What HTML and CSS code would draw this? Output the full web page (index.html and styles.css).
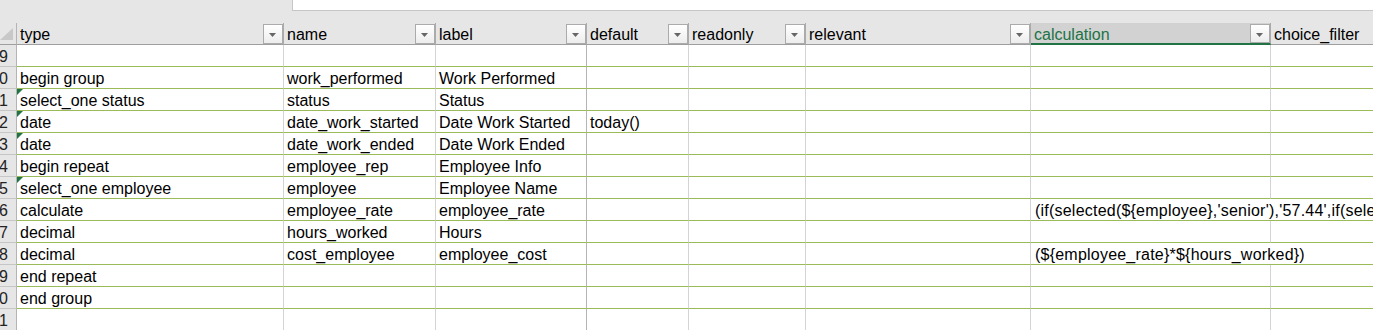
FILE: index.html
```html
<!DOCTYPE html>
<html lang="en">
<head>
<meta charset="utf-8">
<title>Sheet</title>
<link rel="stylesheet" href="styles.css">
</head>
<body>
<div class="app">
  <div class="topbar"><div class="formula"></div></div>
  <div class="viewport">
    <div class="sheet">
      <div class="corner"><svg class="selall" width="14" height="13" viewBox="0 0 14 13"><polygon points="13,0 13,12 0,12" fill="#c8c8c8"/></svg></div>
      <div class="hc"><span>type</span><i class="dd"><svg width="8" height="4" viewBox="0 0 8 4"><polygon points="0,0 7,0 3.5,4" fill="#666"/></svg></i></div>
      <div class="hc"><span>name</span><i class="dd"><svg width="8" height="4" viewBox="0 0 8 4"><polygon points="0,0 7,0 3.5,4" fill="#666"/></svg></i></div>
      <div class="hc"><span>label</span><i class="dd"><svg width="8" height="4" viewBox="0 0 8 4"><polygon points="0,0 7,0 3.5,4" fill="#666"/></svg></i></div>
      <div class="hc"><span>default</span><i class="dd"><svg width="8" height="4" viewBox="0 0 8 4"><polygon points="0,0 7,0 3.5,4" fill="#666"/></svg></i></div>
      <div class="hc"><span>readonly</span><i class="dd"><svg width="8" height="4" viewBox="0 0 8 4"><polygon points="0,0 7,0 3.5,4" fill="#666"/></svg></i></div>
      <div class="hc"><span>relevant</span><i class="dd"><svg width="8" height="4" viewBox="0 0 8 4"><polygon points="0,0 7,0 3.5,4" fill="#666"/></svg></i></div>
      <div class="hc sel"><span>calculation</span><i class="dd"><svg width="8" height="4" viewBox="0 0 8 4"><polygon points="0,0 7,0 3.5,4" fill="#666"/></svg></i></div>
      <div class="hc"><span>choice_filter</span><i class="dd"><svg width="8" height="4" viewBox="0 0 8 4"><polygon points="0,0 7,0 3.5,4" fill="#666"/></svg></i></div>

      <div class="rh"><span>19</span></div>
      <div class="c"></div><div class="c"></div><div class="c lb"></div><div class="c"></div><div class="c"></div><div class="c"></div><div class="c"></div><div class="c"></div>

      <div class="rh"><span>20</span></div>
      <div class="c">begin group</div><div class="c">work_performed</div><div class="c lb">Work Performed</div><div class="c"></div><div class="c"></div><div class="c"></div><div class="c"></div><div class="c"></div>

      <div class="rh"><span>21</span></div>
      <div class="c flag">select_one status</div><div class="c">status</div><div class="c lb">Status</div><div class="c"></div><div class="c"></div><div class="c"></div><div class="c"></div><div class="c"></div>

      <div class="rh"><span>22</span></div>
      <div class="c flag">date</div><div class="c">date_work_started</div><div class="c lb">Date Work Started</div><div class="c">today()</div><div class="c"></div><div class="c"></div><div class="c"></div><div class="c"></div>

      <div class="rh"><span>23</span></div>
      <div class="c flag">date</div><div class="c">date_work_ended</div><div class="c lb">Date Work Ended</div><div class="c"></div><div class="c"></div><div class="c"></div><div class="c"></div><div class="c"></div>

      <div class="rh"><span>24</span></div>
      <div class="c">begin repeat</div><div class="c">employee_rep</div><div class="c lb">Employee Info</div><div class="c"></div><div class="c"></div><div class="c"></div><div class="c"></div><div class="c"></div>

      <div class="rh"><span>25</span></div>
      <div class="c flag">select_one employee</div><div class="c">employee</div><div class="c lb">Employee Name</div><div class="c"></div><div class="c"></div><div class="c"></div><div class="c"></div><div class="c"></div>

      <div class="rh"><span>26</span></div>
      <div class="c">calculate</div><div class="c">employee_rate</div><div class="c lb">employee_rate</div><div class="c"></div><div class="c"></div><div class="c"></div><div class="c calc">(if(selected(${employee},'senior'),'57.44',if(selected(${employee},'junior'),'42.10','0')))</div>

      <div class="rh"><span>27</span></div>
      <div class="c">decimal</div><div class="c">hours_worked</div><div class="c lb">Hours</div><div class="c"></div><div class="c"></div><div class="c"></div><div class="c"></div><div class="c"></div>

      <div class="rh"><span>28</span></div>
      <div class="c">decimal</div><div class="c">cost_employee</div><div class="c lb">employee_cost</div><div class="c"></div><div class="c"></div><div class="c"></div><div class="c calc">(${employee_rate}*${hours_worked})</div>

      <div class="rh"><span>29</span></div>
      <div class="c">end repeat</div><div class="c"></div><div class="c lb"></div><div class="c"></div><div class="c"></div><div class="c"></div><div class="c"></div><div class="c"></div>

      <div class="rh"><span>30</span></div>
      <div class="c">end group</div><div class="c"></div><div class="c lb"></div><div class="c"></div><div class="c"></div><div class="c"></div><div class="c"></div><div class="c"></div>

      <div class="rh"><span>31</span></div>
      <div class="c"></div><div class="c"></div><div class="c lb"></div><div class="c"></div><div class="c"></div><div class="c"></div><div class="c"></div><div class="c"></div>
    </div>
  </div>
</div>
</body>
</html>
```
FILE: styles.css
```css
* { box-sizing: border-box; }

html, body {
  margin: 0;
  padding: 0;
  background: #ffffff;
  overflow: hidden;
}

body {
  font-family: "Liberation Sans", Arial, sans-serif;
  font-size: 16px;
  color: #000000;
}

.app {
  width: 1373px;
  height: 330px;
  overflow: hidden;
  background: #ffffff;
}

.topbar {
  height: 23px;
  background: #e6e6e6;
  padding-left: 292px;
}

.formula {
  height: 11px;
  background: #ffffff;
  border-left: 1px solid #c6c6c6;
  border-bottom: 1px solid #c6c6c6;
}

.viewport {
  width: 1373px;
  height: 307px;
  overflow: hidden;
}

.sheet {
  display: grid;
  grid-template-columns: 17px 267px 152px 151px 102px 117px 225px 240px 220px;
  grid-auto-rows: 22px;
  width: max-content;
}

.corner {
  background: #e6e6e6;
  border-right: 1px solid #b4b4b4;
  border-bottom: 1px solid #9e9e9e;
  padding: 5px 0 0 0;
}

.selall { display: block; }

.hc {
  display: flex;
  background: #e6e6e6;
  border-right: 1px solid #ababab;
  border-bottom: 1px solid #9e9e9e;
  padding-left: 3px;
  line-height: 18px;
  white-space: nowrap;
}

.hc span {
  flex: 1;
  min-width: 0;
  padding-top: 3px;
  overflow: hidden;
}

.hc.sel {
  background: #d2d2d2;
  color: #217346;
  border-bottom: 2px solid #217346;
}

.dd {
  flex: 0 0 20px;
  width: 20px;
  margin-top: 1px;
  border: 1px solid #ababab;
  background: linear-gradient(#ffffff, #ededed);
  display: flex;
  align-items: center;
  justify-content: center;
  padding-top: 2px;
}

.dd svg { display: block; }

.rh {
  display: flex;
  justify-content: flex-end;
  background: #e6e6e6;
  border-right: 1px solid #b4b4b4;
  border-bottom: 1px solid #c6c6c6;
  padding: 3px 8px 0 0;
  line-height: 18px;
  color: #222222;
  overflow: hidden;
  white-space: nowrap;
}

.rh span { flex-shrink: 0; }

.c {
  position: relative;
  border-right: 1px solid #d4d4d4;
  border-bottom: 1px solid #9bbb59;
  padding: 3px 0 0 3px;
  line-height: 18px;
  white-space: nowrap;
  overflow: hidden;
}

.c.lb { border-right-color: #b4b4b4; }

.c.calc {
  grid-column: span 2;
  padding-left: 4px;
  letter-spacing: 0.22px;
}

.c.flag::before {
  content: "";
  position: absolute;
  left: 0;
  top: 0;
  border-top: 6px solid #217346;
  border-right: 6px solid transparent;
}
```
